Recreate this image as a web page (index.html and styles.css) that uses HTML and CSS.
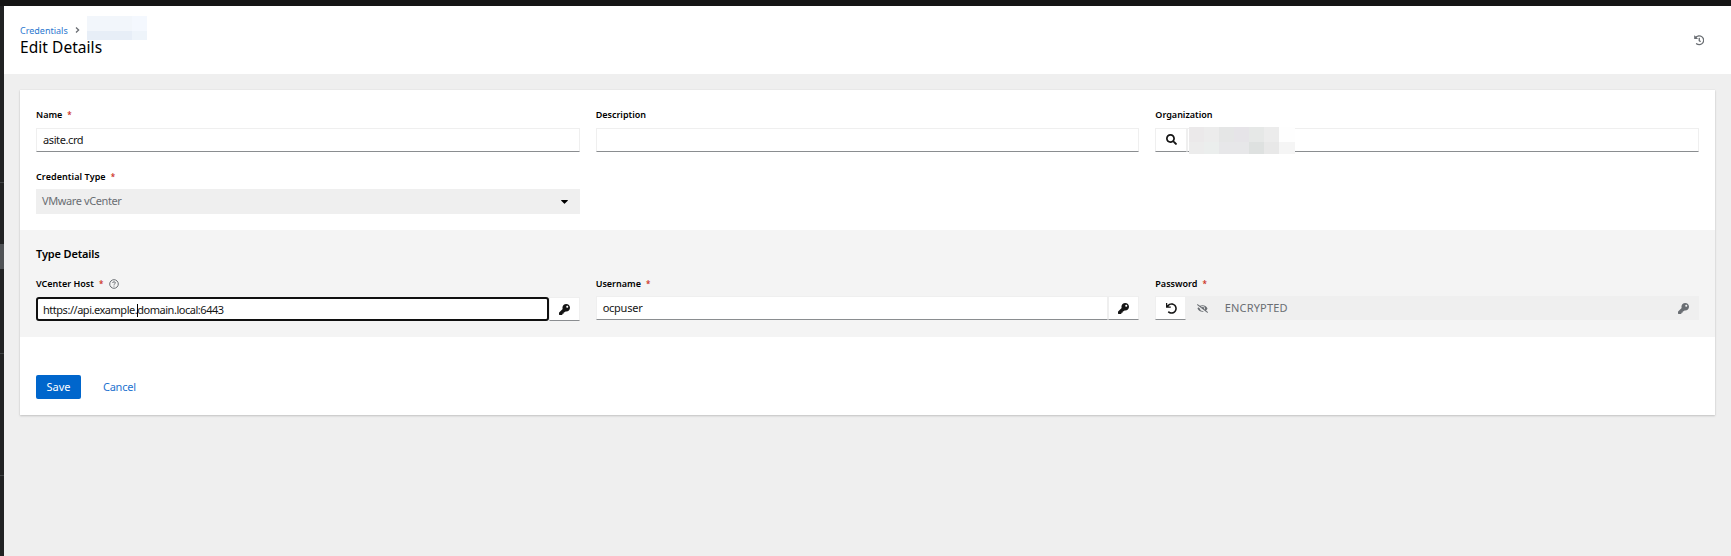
FILE: index.html
```html
<!DOCTYPE html>
<html lang="en">
<head>
<meta charset="utf-8">
<title>Edit Details</title>
<link rel="stylesheet" href="styles.css">
</head>
<body>
<svg class="defs" aria-hidden="true">
  <symbol id="key" viewBox="0 0 512 512"><path d="M512 176.001C512 273.203 433.202 352 336 352c-11.22 0-22.19-1.062-32.827-3.069l-24.012 27.014A23.999 23.999 0 0 1 261.223 384H224v40c0 13.255-10.745 24-24 24h-40v40c0 13.255-10.745 24-24 24H24c-13.255 0-24-10.745-24-24v-78.059c0-6.365 2.529-12.47 7.029-16.971l161.802-161.802C163.108 213.814 160 195.271 160 176 160 78.798 238.797.001 335.999 0 433.488-.001 512 78.511 512 176.001zM336 128c0 26.51 21.49 48 48 48s48-21.49 48-48-21.49-48-48-48-48 21.49-48 48z"/></symbol>
</svg>
<div class="masthead"></div>
<div class="shell">
  <nav class="sidebar"><i class="rule rule-a"></i><i class="current"></i><i class="rule rule-b"></i><i class="rule rule-c"></i></nav>
  <main class="main">
    <header class="header">
      <div class="heading">
        <div class="crumbs">
          <a class="crumb">Credentials</a>
          <svg class="chevron" viewBox="0 0 5 6"><path d="M1 .5 3.6 3 1 5.5" fill="none" stroke="#6a6e73" stroke-width="1.3"/></svg>
          <div class="redacted redacted-crumb"><i></i><i></i><i></i><i></i><i></i><i></i><i></i><i></i></div>
        </div>
        <h1 class="title">Edit Details</h1>
      </div>
      <svg class="history" viewBox="0 0 512 512"><path d="M504 255.531c.253 136.64-111.18 248.372-247.82 248.468-59.015.042-113.223-20.53-155.822-54.911-11.077-8.94-11.905-25.541-1.839-35.607l11.267-11.267c8.609-8.609 22.353-9.551 31.891-1.984C173.062 425.135 212.781 440 256 440c101.705 0 184-82.311 184-184 0-101.705-82.311-184-184-184-48.814 0-93.149 18.969-126.068 49.932l50.754 50.754c10.08 10.08 2.941 27.314-11.313 27.314H24c-8.837 0-16-7.163-16-16V38.627c0-14.254 17.234-21.393 27.314-11.314l49.372 49.372C129.209 34.136 189.552 8 256 8c136.81 0 247.747 110.78 248 247.531zm-180.912 78.784l9.823-12.63c8.138-10.463 6.253-25.542-4.21-33.679L288 256.349V152c0-13.255-10.745-24-24-24h-16c-13.255 0-24 10.745-24 24v135.651l65.409 50.874c10.463 8.137 25.541 6.253 33.679-4.21z"/></svg>
    </header>
    <section class="card">
      <div class="grid basics">
        <div class="field">
          <div class="label"><span>Name</span><b class="req">*</b></div>
          <div class="control"><span class="value">asite.crd</span></div>
        </div>
        <div class="field">
          <div class="label"><span>Description</span></div>
          <div class="control"></div>
        </div>
        <div class="field">
          <div class="label"><span>Organization</span></div>
          <div class="group">
            <div class="addon search"><svg class="icon" viewBox="0 0 512 512"><path d="M505 442.7L405.3 343c-4.5-4.5-10.6-7-17-7H372c27.6-35.3 44-79.7 44-128C416 93.1 322.9 0 208 0S0 93.1 0 208s93.1 208 208 208c48.3 0 92.7-16.4 128-44v16.3c0 6.4 2.5 12.5 7 17l99.7 99.7c9.4 9.4 24.6 9.4 33.9 0l28.3-28.3c9.4-9.4 9.4-24.6.1-34zM208 336c-70.7 0-128-57.2-128-128 0-70.7 57.2-128 128-128 70.7 0 128 57.2 128 128 0 70.7-57.2 128-128 128z"/></svg></div>
            <div class="control org">
              <div class="redacted redacted-org"><i></i><i></i><i></i><i></i><i></i><i></i><i></i><i></i><i></i><i></i><i></i><i></i><i></i><i></i></div>
            </div>
          </div>
        </div>
        <div class="field type">
          <div class="label"><span class="type-text">Credential Type</span><b class="req">*</b></div>
          <div class="select"><span class="value">VMware vCenter</span><svg class="caret" viewBox="0 0 7 4"><path d="M.3 0h6.4q.4.3 0 .7L3.9 3.6q-.4.4-.8 0L.3.7Q-.1.3.3 0z"/></svg></div>
        </div>
      </div>
      <div class="details">
        <h2 class="subtitle">Type Details</h2>
        <div class="grid">
          <div class="field">
            <div class="label"><span>VCenter Host</span><b class="req">*</b>
              <svg class="help" viewBox="0 0 10 10"><circle cx="5" cy="5" r="4.3" fill="none" stroke="#6a6e73"/><path d="M3.6 4Q3.7 2.8 5 2.8T6.4 3.9Q6.4 4.5 5.6 4.9 5 5.2 5 5.8M5 6.6v1" fill="none" stroke="#6a6e73" stroke-width=".95"/></svg>
            </div>
            <div class="group host">
              <div class="control focused"><span class="url">https://api.example.<i class="cursor"></i>domain.local:6443</span></div>
              <div class="addon"><svg class="icon"><use href="#key"/></svg></div>
            </div>
          </div>
          <div class="field">
            <div class="label"><span>Username</span><b class="req">*</b></div>
            <div class="group">
              <div class="control"><span class="value user">ocpuser</span></div>
              <div class="addon"><svg class="icon"><use href="#key"/></svg></div>
            </div>
          </div>
          <div class="field">
            <div class="label"><span>Password</span><b class="req">*</b></div>
            <div class="group">
              <div class="addon undo"><svg class="icon" viewBox="0 0 512 512"><path d="M212.333 224.333H12c-6.627 0-12-5.373-12-12V12C0 5.373 5.373 0 12 0h34c6.627 0 12 5.373 12 12v98C112 45 184.26 7.47 258.175 8.007c136.906.994 246.448 111.623 246.157 248.532C504.041 393.258 393.12 504 256.333 504c-64.089 0-122.496-24.313-166.51-64.215-5.099-4.622-5.334-12.554-.467-17.42l33.967-33.967c4.474-4.474 11.662-4.717 16.401-.525C170.76 415.336 211.58 432 256.333 432c97.268 0 176-78.716 176-176 0-97.267-78.716-176-176-176-58.496 0-110.28 28.476-142.274 82h98.274c6.627 0 12 5.373 12 12v38c0 6.627-5.373 12-12 12z"/></svg></div>
              <div class="disabled">
                <svg class="eye" viewBox="0 0 640 512"><path d="M320 400c-75.85 0-137.25-58.71-142.9-133.11L72.2 185.82c-13.79 17.3-26.48 35.59-36.72 55.59a32.35 32.35 0 0 0 0 29.19C89.71 376.41 197.07 448 320 448c26.91 0 52.87-4 77.89-10.46L346 397.39a144.13 144.13 0 0 1-26 2.61zm313.82 58.1l-110.55-85.44a331.25 331.25 0 0 0 81.25-102.07 32.35 32.35 0 0 0 0-29.19C550.29 135.59 442.93 64 320 64a308.15 308.15 0 0 0-147.32 37.7L45.46 3.37A16 16 0 0 0 23 6.18L3.37 31.45A16 16 0 0 0 6.18 53.9l588.36 454.73a16 16 0 0 0 22.46-2.81l19.64-25.27a16 16 0 0 0-2.82-22.45zM450.19 317.41l-39.4-30.45a94.75 94.75 0 0 0-116.52-121.93 47.34 47.34 0 0 1 9.33 28.28 46 46 0 0 1-1.54 10L228.36 151.11A142.63 142.63 0 0 1 320 112a143.92 143.92 0 0 1 144 144c0 21.63-5.29 41.79-13.81 61.41z"/></svg>
                <span class="encrypted">ENCRYPTED</span>
                <svg class="icon muted"><use href="#key"/></svg>
              </div>
            </div>
          </div>
        </div>
      </div>
      <div class="actions"><button class="save"><span>Save</span></button><a class="cancel">Cancel</a></div>
    </section>
  </main>
</div>
</body>
</html>
```
FILE: styles.css
```css
* { box-sizing: border-box; }
body { margin: 0; height: 556px; overflow: hidden; background: #efefef; color: #151515; font: 11px/16px "Noto Sans", "Open Sans", sans-serif; }
.defs { position: absolute; width: 0; height: 0; }
.masthead { height: 6px; background: #151515; }
.shell { display: flex; height: 550px; }
.sidebar { width: 4px; background: #212223; display: flex; flex-direction: column; }
.sidebar i { flex: none; }
.rule { height: 1px; background: #3f4244; }
.rule-a { margin-top: 176px; }
.current { height: 25px; margin-top: 61px; background: #4f5255; }
.rule-b { margin-top: 84px; }
.rule-c { margin-top: 121px; }
.main { flex: 1; }
.header { height: 68px; background: #fff; display: flex; justify-content: space-between; padding: 10px 27px 0 16px; }
.crumbs { display: flex; align-items: flex-start; height: 24px; }
.crumb { width: 48px; margin-top: 7px; line-height: 16px; font-size: 9px; color: #2b78cf; white-space: nowrap; }
.chevron { width: 5px; height: 6px; margin: 11px 10px 0 7px; }
.redacted { display: grid; }
.redacted-crumb { width: 60px; grid-template: 15px 9px / repeat(4, 15px); margin-left: -3px; }
.redacted-crumb i { background: #f2f6fb; }
.redacted-crumb i:nth-child(4) { background: #f4f8fe; }
.redacted-crumb i:nth-child(n+5) { background: #e7eef7; }
.redacted-crumb i:nth-child(8) { background: #eef4fa; }
.title { margin: -3px 0 0; font-size: 15.5px; line-height: 20px; font-weight: 400; letter-spacing: .05px; color: #000; }
.history { width: 10.5px; height: 10.5px; margin-top: 19px; fill: #6a6e73; }
.card { width: 1695px; height: 325px; margin: 16px 0 0 16px; background: #fff; box-shadow: 0 1px 2px rgba(3,3,3,.18), 0 0 1px rgba(3,3,3,.1); }
.grid { display: grid; grid-template-columns: repeat(3, 1fr); column-gap: 16px; }
.basics { height: 140px; padding: 16px 16px 0; align-content: start; row-gap: 16px; }
.label { display: flex; align-items: center; height: 18px; margin-bottom: 4px; font-size: 9px; font-weight: 600; white-space: nowrap; color: #000; }
.req { color: #c9190b; margin-left: 5px; font-size: 8px; font-weight: 500; }
.control { height: 24px; flex: 1; background: #fff; border: 1px solid #efefef; border-bottom-color: #8a8d90; padding: 2px 6px; line-height: 17px; white-space: nowrap; }
.value { letter-spacing: -.4px; }
.user { letter-spacing: -.25px; }
.url { letter-spacing: -.47px; }
.group { display: flex; }
.addon { width: 31px; height: 24px; flex: none; display: flex; align-items: center; justify-content: center; background: #fff; border: 1px solid #efefef; border-bottom-color: #8a8d90; }
.icon { width: 11px; height: 11px; fill: #151515; }
.search { width: 32px; padding-bottom: 1px; }
.undo { padding-left: 1px; }
.org { padding: 0; height: 24px; }
.redacted-org { width: 106px; margin: -2px 0 0 1px; grid-template: 15px 12px / repeat(6, 15px) 16px; position: relative; }
.redacted-org i { background: #ececec; }
.redacted-org i:nth-child(1) { background: #ebe9ea; }
.redacted-org i:nth-child(3) { background: #e5e6e6; }
.redacted-org i:nth-child(4) { background: #e6e4e8; }
.redacted-org i:nth-child(5) { background: #e6e8e7; }
.redacted-org i:nth-child(7) { background: #fefefe; }
.redacted-org i:nth-child(9) { background: #ebeeed; }
.redacted-org i:nth-child(10), .redacted-org i:nth-child(11) { background: #e7e7e9; }
.redacted-org i:nth-child(12) { background: #dee1e0; }
.redacted-org i:nth-child(13) { background: #e8e8e8; }
.redacted-org i:nth-child(14) { background: #f5f5f5; }
.type .label { margin-bottom: 3px; }
.type-text { letter-spacing: .08px; }
.select { height: 25px; display: flex; align-items: center; justify-content: space-between; padding: 0 12px 1px 6px; background: #efefef; color: #6a6e73; }
.caret { width: 7px; height: 4px; margin-top: 1px; }
.details { height: 107px; padding: 15px 16px 0; background: #f4f4f4; }
.subtitle { margin: 0 0 12px; font-size: 11px; line-height: 18px; font-weight: 600; letter-spacing: -.15px; color: #000; }
.details .label { margin-bottom: 3px; }
.help { width: 10px; height: 10px; margin-left: 6px; }
.host { padding-top: 1px; }
.focused { border: 2px solid #101010; border-radius: 3px; padding: 2px 5px; }
.cursor { display: inline-block; width: 1px; height: 13px; margin-right: -1px; background: #000; vertical-align: -3px; }
.disabled { flex: 1; height: 24px; display: flex; align-items: center; padding: 0 10.5px; background: #efefef; color: #6a6e73; }
.eye { width: 11px; height: 9px; margin-right: 17px; fill: #6a6e73; }
.encrypted { letter-spacing: .15px; }
.muted { margin-left: auto; fill: #6a6e73; }
.actions { display: flex; align-items: center; padding: 38px 16px 0; }
.save { width: 45px; height: 24px; border: 0; border-radius: 2px; padding: 0; background: #06c; color: #fff; font: inherit; }
.cancel { margin-left: 22px; letter-spacing: -.25px; color: #1c72cf; }
```
